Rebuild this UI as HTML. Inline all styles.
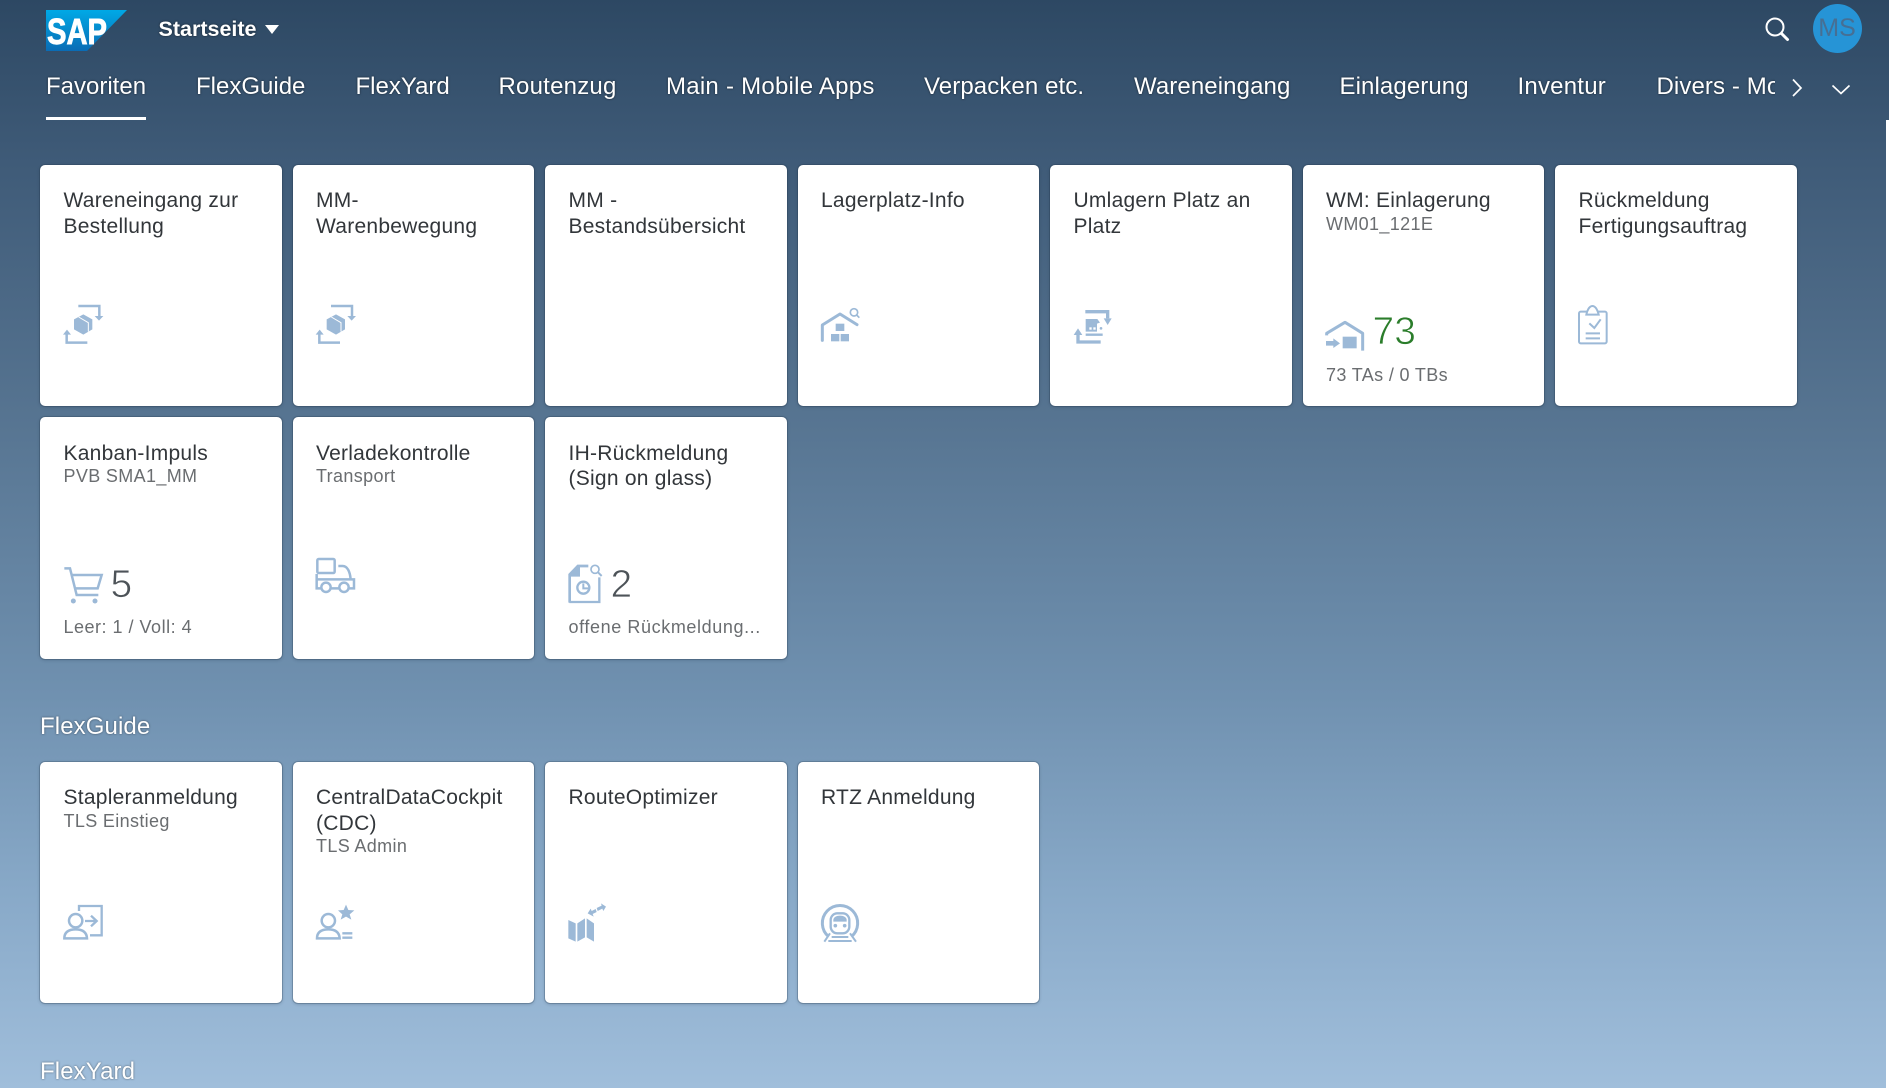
<!DOCTYPE html>
<html><head><meta charset="utf-8"><style>
html,body{margin:0;padding:0;width:1889px;height:1088px;overflow:hidden}
body{position:relative;font-family:"Liberation Sans",sans-serif;background:linear-gradient(180deg,#2d4863 0%,#3f5b78 15%,#587693 40%,#7091b0 64%,#88a9c8 82%,#a0bedb 100%)}
.n{position:absolute;top:72px;font-size:24px;line-height:30px;color:#fff;text-shadow:0 0 2px rgba(0,0,0,.6);white-space:nowrap;letter-spacing:.1px}
.c{position:absolute;width:241.5px;height:241.5px;background:#fff;border-radius:5px;box-shadow:0 0 0 1px rgba(30,50,70,.22),0 1px 3px rgba(30,50,70,.3)}
.t{position:absolute;left:23.5px;top:23.5px;width:212px;font-size:21px;line-height:25.7px;color:#32363a;letter-spacing:.25px}
.s{font-size:18px;line-height:20px;color:#6a6d70;display:block;letter-spacing:.35px;position:relative;top:0}
.f{position:absolute;left:23.5px;top:199px;font-size:18px;line-height:22px;color:#6a6d70;white-space:nowrap;letter-spacing:.35px}
.v{position:absolute;font-size:39px;line-height:44px;color:#4d5358;-webkit-text-stroke:.8px #fff;top:145.5px}
.h{position:absolute;left:40px;font-size:24px;line-height:30px;color:#fff;text-shadow:0 0 2px rgba(0,0,0,.5);letter-spacing:.1px}
svg.o{position:absolute;fill:#9cb9d7;stroke:none}
.l{fill:none;stroke:#9cb9d7}
</style></head><body>

<svg style="position:absolute;left:46px;top:10px" width="82" height="42" viewBox="0 0 82 42">
<defs><linearGradient id="g" x1="0" y1="0" x2="0" y2="1"><stop offset="0" stop-color="#00a9e6"/><stop offset="1" stop-color="#0a6cb5"/></linearGradient></defs>
<polygon points="0,0 81,0 41,41 0,41" fill="url(#g)"/>
<text x="1" y="34" font-family="Liberation Sans" font-weight="bold" font-size="36" fill="#fff" stroke="#fff" stroke-width=".9" textLength="60" lengthAdjust="spacingAndGlyphs">SAP</text>
</svg>
<div style="position:absolute;left:158.500px;top:16px;font-size:21.500px;line-height:26px;font-weight:bold;color:#fff;text-shadow:0 0 2px rgba(0,0,0,.6)">Startseite</div>
<svg style="position:absolute;left:264px;top:24px" width="16" height="11"><polygon points="1,1 15,1 8,10" fill="#fff"/></svg>

<svg style="position:absolute;left:1762px;top:14px" width="30" height="30"><circle cx="13" cy="13" r="8.5" fill="none" stroke="#fff" stroke-width="2"/><path d="M19.5 19.5L25.5 25.5" stroke="#fff" stroke-width="3" stroke-linecap="round"/></svg>
<div style="position:absolute;left:1812.5px;top:4px;width:49px;height:49px;border-radius:50%;background:#2694d6;color:#466f94;font-size:25px;line-height:49px;text-align:center">MS</div>

<div class="n" style="left:46px;letter-spacing:0">Favoriten</div>
<div style="position:absolute;left:46px;top:117px;width:100px;height:3px;background:#fff"></div>
<div class="n" style="left:196px;letter-spacing:0">FlexGuide</div>
<div class="n" style="left:355.500px;letter-spacing:0">FlexYard</div>
<div class="n" style="left:498.500px;letter-spacing:.22px">Routenzug</div>
<div class="n" style="left:666px;letter-spacing:.25px">Main - Mobile Apps</div>
<div class="n" style="left:924px">Verpacken etc.</div>
<div class="n" style="left:1134px">Wareneingang</div>
<div class="n" style="left:1339.500px">Einlagerung</div>
<div class="n" style="left:1517.500px;letter-spacing:.22px">Inventur</div>
<div class="n" style="left:1656.500px;width:118.500px;overflow:hidden">Divers - Mobile Apps</div>
<svg style="position:absolute;left:1788px;top:76px" width="18" height="24"><path d="M5 3.500L13 12L5 20" fill="none" stroke="#fff" stroke-width="1.700"/></svg>
<svg style="position:absolute;left:1830px;top:82px" width="22" height="16"><path d="M2.500 3.500L11 11.500L19.500 3.500" fill="none" stroke="#fff" stroke-width="1.700"/></svg>
<div style="position:absolute;left:1886px;top:120px;width:3px;height:968px;background:#fff"></div>

<!-- row 1 -->
<div class="c" style="left:40px;top:164.500px"><div class="t">Wareneingang zur Bestellung</div></div>
<div class="c" style="left:292.500px;top:164.500px"><div class="t">MM-<br>Warenbewegung</div></div>
<div class="c" style="left:545px;top:164.500px"><div class="t">MM -<br>Bestandsübersicht</div></div>
<div class="c" style="left:797.500px;top:164.500px"><div class="t">Lagerplatz-Info</div></div>
<div class="c" style="left:1050px;top:164.500px"><div class="t">Umlagern Platz an Platz</div></div>
<div class="c" style="left:1302.500px;top:164.500px"><div class="t">WM: Einlagerung<span class="s">WM01_121E</span></div>
<div class="v" style="left:70px;color:#2b7d2b">73</div><div class="f">73 TAs / 0 TBs</div></div>
<div class="c" style="left:1555px;top:164.500px"><div class="t">Rückmeldung Fertigungsauftrag</div></div>
<!-- row 2 -->
<div class="c" style="left:40px;top:417px"><div class="t">Kanban-Impuls<span class="s">PVB SMA1_MM</span></div>
<div class="v" style="left:70.500px">5</div><div class="f" style="letter-spacing:.5px">Leer: 1 / Voll: 4</div></div>
<div class="c" style="left:292.500px;top:417px"><div class="t">Verladekontrolle<span class="s">Transport</span></div></div>
<div class="c" style="left:545px;top:417px"><div class="t">IH-Rückmeldung<br>(Sign on glass)</div>
<div class="v" style="left:65.500px">2</div><div class="f" style="letter-spacing:.6px">offene Rückmeldung...</div></div>
<!-- row 3 -->
<div class="h" style="top:712px">FlexGuide</div>
<div class="c" style="left:40px;top:761.500px"><div class="t">Stapleranmeldung<span class="s">TLS Einstieg</span></div></div>
<div class="c" style="left:292.500px;top:761.500px"><div class="t">CentralDataCockpit (CDC)<span class="s">TLS Admin</span></div></div>
<div class="c" style="left:545px;top:761.500px"><div class="t">RouteOptimizer</div></div>
<div class="c" style="left:797.500px;top:761.500px"><div class="t">RTZ Anmeldung</div></div>
<div class="h" style="top:1057px">FlexYard</div>

<!-- icons: crop A -->
<svg class="o" style="left:30px;top:280px" width="380" height="130" viewBox="0 0 1140 390">
<g>
<path class="l" stroke-width="7.500" d="M145 78H208V110M172 188H110V160"/>
<polygon points="194,108 220,108 207,122"/><polygon points="99,164 123,164 111,149"/>
<polygon points="160,103 187,118 187,148 160,164 132,148 132,118"/>
<path d="M146 111L175 128V155" fill="none" stroke="#fff" stroke-width="3"/>
</g>
<g transform="translate(758 0)">
<path class="l" stroke-width="7.500" d="M145 78H208V110M172 188H110V160"/>
<polygon points="194,108 220,108 207,122"/><polygon points="99,164 123,164 111,149"/>
<polygon points="160,103 187,118 187,148 160,164 132,148 132,118"/>
<path d="M146 111L175 128V155" fill="none" stroke="#fff" stroke-width="3"/>
</g>
</svg>
<!-- crop B -->
<svg class="o" style="left:790px;top:280px" width="380" height="130" viewBox="0 0 1140 390">
<path class="l" stroke-width="9" stroke-linecap="round" stroke-linejoin="round" d="M97 181V135L150 102L201 134"/>
<rect x="137" y="131" width="26" height="22"/><rect x="123" y="162" width="25" height="22"/><rect x="152" y="162" width="25" height="22"/>
<circle class="l" cx="192" cy="97" r="11" stroke-width="5"/><path class="l" stroke-width="5" d="M200 105L208 113"/>
<path class="l" stroke-width="10" d="M886 95H953V115M932 186H864V165"/>
<polygon points="941,115 965,115 953,135"/><polygon points="851,165 877,165 864,145"/>
<polygon points="887,117 922,117 930,128 921,131 921,155 887,155"/>
<rect x="898" y="142" width="7" height="7" fill="#fff"/><rect x="910" y="142" width="7" height="7" fill="#fff"/>
<circle cx="933" cy="145" r="4"/><path class="l" stroke-width="7" d="M887 164H938"/>
</svg>
<!-- crop C -->
<svg class="o" style="left:1300px;top:280px" width="380" height="130" viewBox="0 0 1140 390">
<path class="l" stroke-width="9" stroke-linejoin="round" d="M80 166V160L135 127L188 160V212"/>
<polygon points="78,183 100,183 100,175 120,190 100,204 100,197 78,197"/>
<rect x="128" y="170" width="42" height="35"/>
<rect class="l" x="837" y="95" width="83" height="95" rx="5" stroke-width="6"/>
<path d="M859 104C861 92 868 78 877 78C887 78 893 92 896 104Z" fill="#fff" stroke="#9cb9d7" stroke-width="6"/>
<path class="l" stroke-width="6" d="M868 130L883 144L902 118M857 160H900M857 175H900"/>
</svg>
<!-- crop D -->
<svg class="o" style="left:30px;top:540px" width="380" height="130" viewBox="0 0 1140 390">
<path class="l" stroke-width="7.500" d="M103 85H120L140 165H205M125 105H215L203 145H135"/>
<circle cx="130" cy="183" r="7.500"/><circle cx="195" cy="183" r="7.500"/>
<rect class="l" x="862" y="57" width="52" height="42" rx="4" stroke-width="7.500"/>
<path class="l" stroke-width="7.500" d="M925 78H938C952 78 960 95 962 118M860 102V145H872M904 145H926M958 145H972V118H860"/>
<circle class="l" cx="888" cy="142" r="14" stroke-width="7.500"/><circle class="l" cx="942" cy="142" r="14" stroke-width="7.500"/>
</svg>
<!-- crop E -->
<svg class="o" style="left:540px;top:540px" width="280" height="130" viewBox="0 0 840 390">
<polygon points="85,102 112,74 145,74 145,82 120,82 120,110 93,110 93,188 85,188"/>
<path class="l" stroke-width="7" d="M88 186H178V112"/>
<circle class="l" cx="130" cy="143" r="18" stroke-width="7"/><path class="l" stroke-width="6" d="M130 130V145H145"/>
<circle class="l" cx="165" cy="88" r="12" stroke-width="5"/><path class="l" stroke-width="6" d="M174 97L185 108"/>
</svg>
<!-- crop F -->
<svg class="o" style="left:30px;top:880px" width="380" height="130" viewBox="0 0 1140 390">
<circle class="l" cx="137" cy="122" r="20" stroke-width="7.500"/>
<path class="l" stroke-width="7.500" d="M103 175C103 155 117 148 137 148C157 148 170 155 171 175Z"/>
<path class="l" stroke-width="7" d="M147 93V78H215V166H180M165 123H200M183 107L200 123L183 139"/>
<circle class="l" cx="895" cy="122" r="20" stroke-width="7.500"/>
<path class="l" stroke-width="7.500" d="M861 175C861 155 875 148 895 148C915 148 928 155 929 175Z"/>
<polygon points="948,74 955,90 973,91 959,103 964,119 948,110 932,119 937,103 924,91 941,90"/>
<path class="l" stroke-width="7" d="M937 160H967M937 173H967"/>
</svg>
<!-- crop G -->
<svg class="o" style="left:540px;top:880px" width="380" height="130" viewBox="0 0 1140 390">
<polygon points="85,120 107,130 107,185 85,175"/><polygon points="112,130 135,115 135,172 112,185"/><polygon points="140,115 162,130 162,185 140,172"/>
<polygon points="198,80 183,70 185,77 170,84 173,93 187,86 190,93"/>
<polygon points="143,100 152,86 155,93 167,87 170,96 158,102 161,110"/>
<path class="l" stroke-width="9" d="M866 170A53 53 0 1 1 934 170"/>
<rect class="l" x="872" y="100" width="56" height="60" rx="20" stroke-width="7"/>
<path d="M880 125V120C880 112 890 107 900 107C910 107 920 112 920 120V125Z"/>
<circle cx="886" cy="137" r="5.500"/><circle cx="914" cy="137" r="5.500"/>
<path class="l" stroke-width="6" d="M870 160L853 185M930 160L948 185M875 171H925M865 183H935"/>
</svg>
</body></html>
